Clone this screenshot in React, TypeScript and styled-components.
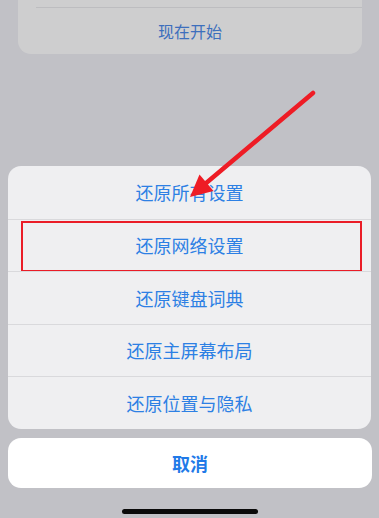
import React from 'react';
import styled, { createGlobalStyle } from 'styled-components';

const GlobalStyle = createGlobalStyle`
  html, body {
    margin: 0;
    padding: 0;
    background: #c1c1c6;
  }
  body {
    font-family: 'Noto Sans CJK SC', 'Noto Sans', sans-serif;
  }
`;

const Page = styled.div`
  position: relative;
  width: 379px;
  height: 518px;
  overflow: hidden;
  background: #c1c1c6;
  display: flex;
  flex-direction: column;
`;

const BackCard = styled.div`
  margin: 0 17px 0 18px;
  background: #cececf;
  border-radius: 0 0 13px 13px;
  display: flex;
  flex-direction: column;
`;

const BackStub = styled.div`
  height: 7px;
  margin-left: 18px;
  border-bottom: 1px solid #bdbdc0;
`;

const BackRow = styled.div`
  height: 46px;
  display: flex;
  align-items: center;
  justify-content: center;
  font-size: 16px;
  color: #3d6fbd;
`;

const Sheet = styled.div`
  margin: 112px 8px 0 8px;
  background: #efeff1;
  border-radius: 13px;
  display: flex;
  flex-direction: column;
`;

const ActionRow = styled.div<{ $first?: boolean }>`
  position: relative;
  box-sizing: border-box;
  height: 52.5px;
  display: flex;
  align-items: center;
  justify-content: center;
  font-size: 18px;
  color: #2d80e4;
  border-top: ${(p) => (p.$first ? 'none' : '1px solid #d9d9dc')};
`;

const Highlight = styled.div`
  position: absolute;
  left: 13px;
  right: 9px;
  top: 1px;
  bottom: -1px;
  border: 2px solid #ea1c27;
`;

const CancelButton = styled.div`
  margin: 9px 7px 0 8px;
  height: 50px;
  background: #ffffff;
  border-radius: 13px;
  display: flex;
  align-items: center;
  justify-content: center;
  font-size: 18px;
  font-weight: 700;
  color: #1f7ae8;
`;

const HomeIndicator = styled.div`
  align-self: center;
  margin-top: 21px;
  width: 136px;
  height: 5px;
  border-radius: 3px;
  background: #0a0a0a;
`;

const ArrowLayer = styled.svg`
  position: absolute;
  left: 0;
  top: 0;
  pointer-events: none;
`;

const actions = ['还原所有设置', '还原网络设置', '还原键盘词典', '还原主屏幕布局', '还原位置与隐私'];

const App: React.FC = () => {
  return (
    <>
      <GlobalStyle />
      <Page>
        <BackCard>
          <BackStub />
          <BackRow>现在开始</BackRow>
        </BackCard>
        <Sheet>
          {actions.map((label, i) => (
            <ActionRow key={label} $first={i === 0}>
              {label}
              {i === 1 && <Highlight />}
            </ActionRow>
          ))}
        </Sheet>
        <CancelButton>取消</CancelButton>
        <HomeIndicator />
        <ArrowLayer width="379" height="518" viewBox="0 0 379 518">
          <line
            x1="313"
            y1="93"
            x2="205"
            y2="184"
            stroke="#ee1c25"
            strokeWidth="4.5"
            strokeLinecap="round"
          />
          <polygon points="190,197 199.5,174.5 213.5,191" fill="#ee1c25" />
        </ArrowLayer>
      </Page>
    </>
  );
};

export default App;
